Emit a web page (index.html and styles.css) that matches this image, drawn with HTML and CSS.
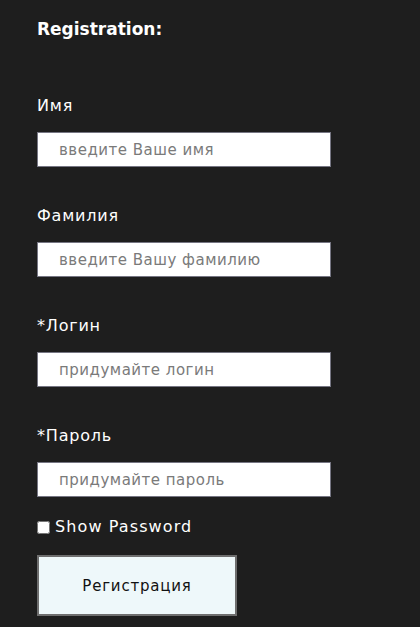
FILE: index.html
```html
<!DOCTYPE html>
<html lang="ru">
<head>
<meta charset="utf-8">
<link rel="stylesheet" href="styles.css">
</head>
<body>
<form class="form">
  <h2 class="title">Registration:</h2>
  <div class="field">
    <label class="label">Имя</label>
    <input class="input" type="text" placeholder="введите Ваше имя">
  </div>
  <div class="field">
    <label class="label">Фамилия</label>
    <input class="input" type="text" placeholder="введите Вашу фамилию">
  </div>
  <div class="field">
    <label class="label">*Логин</label>
    <input class="input" type="text" placeholder="придумайте логин">
  </div>
  <div class="field">
    <label class="label">*Пароль</label>
    <input class="input" type="password" placeholder="придумайте пароль">
  </div>
  <label class="show"><input class="check" type="checkbox">Show Password</label>
  <button class="btn" type="button">Регистрация</button>
</form>
</body>
</html>
```
FILE: styles.css
```css
html, body {
  margin: 0;
  padding: 0;
  background: #1e1e1e;
  height: 100%;
}
body {
  font-family: "DejaVu Sans", "Noto Sans", sans-serif;
  color: #ffffff;
}
.form {
  padding: 17px 0 0 37px;
  display: flex;
  flex-direction: column;
  align-items: flex-start;
}
.title {
  margin: 0;
  font-size: 17px;
  font-weight: bold;
  line-height: 24px;
  height: 24px;
}
.field {
  display: flex;
  flex-direction: column;
  align-items: flex-start;
  margin-top: 55px;
}
.field + .field {
  margin-top: 39px;
}
.label {
  font-size: 16px;
  line-height: 20px;
  height: 20px;
  margin-bottom: 16px;
  letter-spacing: 0.8px;
}
.input {
  box-sizing: border-box;
  width: 294px;
  height: 35px;
  margin: 0;
  border: 1px solid #767683;
  background: #ffffff;
  padding: 0 0 0 21px;
  font-family: inherit;
  font-size: 15px;
  letter-spacing: 0.5px;
  color: #333;
  outline: none;
}
.input::placeholder {
  color: #7a7a7a;
}
.show {
  display: flex;
  align-items: center;
  margin-top: 20px;
  font-size: 16px;
  line-height: 20px;
  letter-spacing: 1.1px;
}
.check {
  width: 13px;
  height: 13px;
  margin: 0 5px 0 0;
}
.btn {
  margin-top: 18px;
  box-sizing: border-box;
  width: 200px;
  height: 61px;
  background: #eef8fa;
  border: 2px solid #6e6e6e;
  font-family: inherit;
  font-size: 15px;
  letter-spacing: 0.8px;
  color: #111;
}
```
